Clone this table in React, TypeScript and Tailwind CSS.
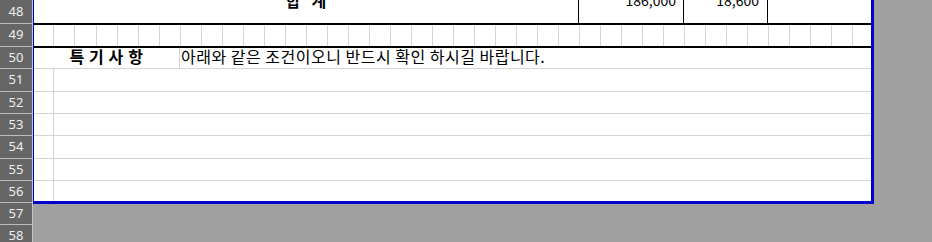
import React from "react";

const headerRows: { n: number; h: string }[] = [
  { n: 48, h: "h-[24px]" },
  { n: 49, h: "h-[23px]" },
  { n: 50, h: "h-[22px]" },
  { n: 51, h: "h-[23px]" },
  { n: 52, h: "h-[22px]" },
  { n: 53, h: "h-[22px]" },
  { n: 54, h: "h-[23px]" },
  { n: 55, h: "h-[22px]" },
  { n: 56, h: "h-[22px]" },
  { n: 57, h: "h-[22px]" },
  { n: 58, h: "h-[22px]" },
];

const kr = { fontFamily: '"Noto Sans CJK KR", "Noto Sans", sans-serif' };

function GridRow() {
  const rest = Array.from({ length: 36 });
  return (
    <div className="flex h-[23px] border-b-2 border-black">
      <div className="w-[20px] shrink-0 border-r border-[#d4d4d4]" />
      <div className="w-[21px] shrink-0 border-r border-[#d4d4d4]" />
      <div className="w-[22px] shrink-0 border-r border-[#d4d4d4]" />
      {rest.map((_, i) => (
        <div key={i} className="w-[21px] shrink-0 border-r border-[#d4d4d4]" />
      ))}
      <div className="flex-1" />
    </div>
  );
}

function EmptyRow({ h, last }: { h: string; last?: boolean }) {
  return (
    <div className={`flex ${h} ${last ? "" : "border-b border-[#d4d4d4]"}`}>
      <div className="w-[20px] shrink-0 border-r border-[#d4d4d4]" />
      <div className="flex-1" />
    </div>
  );
}

export default function App() {
  return (
    <div className="flex h-[242px] w-[932px] overflow-hidden bg-[#a0a0a0]">
      {/* row headers */}
      <div className="flex w-[33px] shrink-0 flex-col border-r border-[#c4c4c4] bg-[#666666]">
        {headerRows.map((r) => (
          <div
            key={r.n}
            className={`flex ${r.h} shrink-0 items-center justify-center border-b border-[#bdbdbd] text-[13px] text-[#eeeeee]`}
            style={{ fontFamily: '"Noto Sans", sans-serif' }}
          >
            {r.n}
          </div>
        ))}
      </div>

      {/* sheet */}
      <div
        className="flex w-[841px] shrink-0 flex-col self-start border-b-[3px] border-l border-r-[3px] border-[#0000cc] bg-white text-black"
        style={kr}
      >
        {/* row 48 */}
        <div className="flex h-[25px] overflow-hidden border-b-2 border-black">
          <div className="w-[544px] shrink-0">
            <div className="-mt-[8px] whitespace-pre text-center text-[16px] font-bold leading-[16px]">
              {"합   계"}
            </div>
          </div>
          <div className="w-[105px] shrink-0 border-l border-black pr-[7px]">
            <div className="-mt-[7px] text-right text-[14px] leading-[15px]">186,000</div>
          </div>
          <div className="w-[84px] shrink-0 border-l border-black pr-[8px]">
            <div className="-mt-[7px] text-right text-[14px] leading-[15px]">18,600</div>
          </div>
          <div className="flex-1 border-l border-black" />
        </div>

        {/* row 49 */}
        <GridRow />

        {/* row 50 */}
        <div className="flex h-[21px] border-b border-[#d4d4d4]">
          <div className="w-[146px] shrink-0 border-r border-[#d4d4d4]">
            <div className="whitespace-pre text-center text-[16px] font-bold leading-[16px] tracking-[0.6px]">
              {"특 기 사 항"}
            </div>
          </div>
          <div className="flex-1 pl-[1px]">
            <div className="whitespace-pre text-[16px] leading-[16px] tracking-[0.5px]">
              아래와 같은 조건이오니 반드시 확인 하시길 바랍니다.
            </div>
          </div>
        </div>

        <EmptyRow h="h-[23px]" />
        <EmptyRow h="h-[22px]" />
        <EmptyRow h="h-[22px]" />
        <EmptyRow h="h-[23px]" />
        <EmptyRow h="h-[22px]" />
        <EmptyRow h="h-[20px]" last />
      </div>
    </div>
  );
}
